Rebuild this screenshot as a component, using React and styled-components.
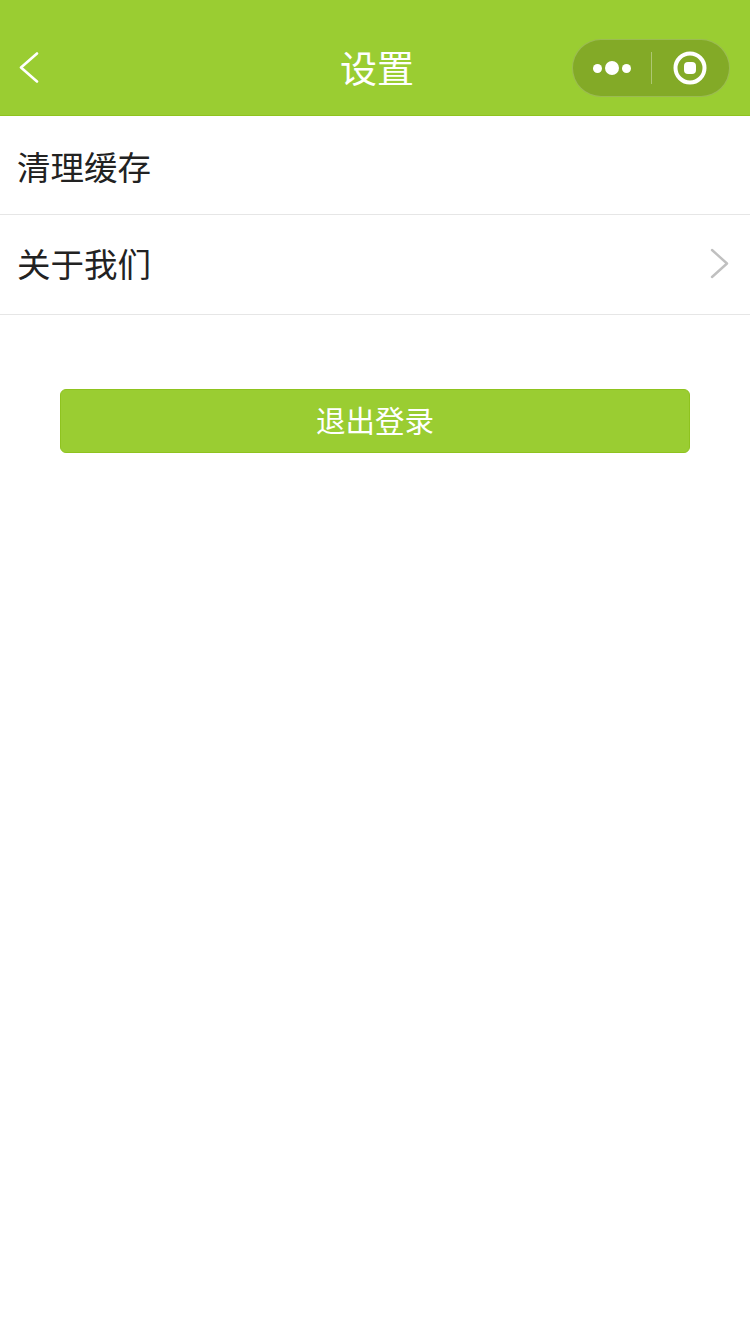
import React from "react";
import styled, { createGlobalStyle } from "styled-components";

const GlobalStyle = createGlobalStyle`
  html, body {
    margin: 0;
    padding: 0;
    background: #fff;
    font-family: "Liberation Sans", "Noto Sans CJK SC", sans-serif;
  }
`;

const Page = styled.div`
  width: 750px;
  height: 1334px;
  background: #fff;
  overflow: hidden;
`;

const NavBar = styled.header`
  height: 116px;
  box-sizing: border-box;
  padding: 39px 20px 0 19px;
  background: #9acd32;
  border-bottom: 1px solid #8fc31f;
  display: grid;
  grid-template-columns: 1fr auto 1fr;
  align-items: start;
  color: #fff;
`;

const BackIcon = styled.svg`
  display: block;
  width: 20px;
  height: 32px;
  margin-top: 13px;
`;

const Title = styled.h1`
  margin: 8px 0 0 5px;
  font-size: 37px;
  line-height: 48px;
  font-weight: 400;
`;

const Capsule = styled.div`
  justify-self: end;
  width: 158px;
  height: 58px;
  box-sizing: border-box;
  border: 1px solid rgba(255, 255, 255, 0.2);
  border-radius: 29px;
  background: #83aa27;
  display: flex;
  align-items: center;
`;

const MoreDots = styled.div`
  width: 78px;
  display: flex;
  align-items: center;
  justify-content: center;
  gap: 3px;
`;

const Dot = styled.span`
  width: ${props => props.size}px;
  height: ${props => props.size}px;
  border-radius: 50%;
  background: #fff;
`;

const Divider = styled.span`
  width: 1px;
  height: 32px;
  background: rgba(255, 255, 255, 0.35);
`;

const Target = styled.svg`
  display: block;
  width: 34px;
  height: 34px;
  margin-left: 21px;
`;

const Row = styled.div`
  height: ${props => props.height}px;
  box-sizing: border-box;
  padding: ${props => props.shift}px 22px 0 17px;
  border-bottom: 1px solid #e6e6e6;
  display: flex;
  align-items: center;
  justify-content: space-between;
`;

const RowLabel = styled.span`
  font-size: 33.5px;
  line-height: 44px;
  color: #222;
`;

const Chevron = styled.svg`
  display: block;
  width: 20px;
  height: 32px;
  margin: -4px -2px 0 0;
`;

const Actions = styled.div`
  padding: 74px 60px 0;
`;

const LogoutButton = styled.button`
  display: block;
  width: 630px;
  height: 64px;
  padding: 0 0 4px;
  border: 1px solid #8fc31f;
  border-radius: 6px;
  background: #9acd32;
  color: #fff;
  font: inherit;
  font-size: 29.5px;
`;

export default function App() {
  return (
    <Page>
      <GlobalStyle />
      <NavBar>
        <BackIcon viewBox="0 0 20 32">
          <path d="M18 1.5 L2 15.5 L18 29.5" fill="none" stroke="#fff" strokeWidth="2.6" strokeLinecap="round" strokeLinejoin="round" />
        </BackIcon>
        <Title>设置</Title>
        <Capsule>
          <MoreDots>
            <Dot size={9} />
            <Dot size={14} />
            <Dot size={9} />
          </MoreDots>
          <Divider />
          <Target viewBox="0 0 34 34">
            <circle cx="17" cy="17" r="14.5" fill="none" stroke="#fff" strokeWidth="4" />
            <rect x="11" y="11" width="12" height="12" rx="4" fill="#fff" />
          </Target>
        </Capsule>
      </NavBar>
      <Row height={99} shift={8}>
        <RowLabel>清理缓存</RowLabel>
      </Row>
      <Row height={100} shift={2}>
        <RowLabel>关于我们</RowLabel>
        <Chevron viewBox="0 0 20 32">
          <path d="M2 2 L17 15.5 L2 29" fill="none" stroke="#c0c0c0" strokeWidth="2.4" strokeLinecap="round" strokeLinejoin="round" />
        </Chevron>
      </Row>
      <Actions>
        <LogoutButton>退出登录</LogoutButton>
      </Actions>
    </Page>
  );
}
